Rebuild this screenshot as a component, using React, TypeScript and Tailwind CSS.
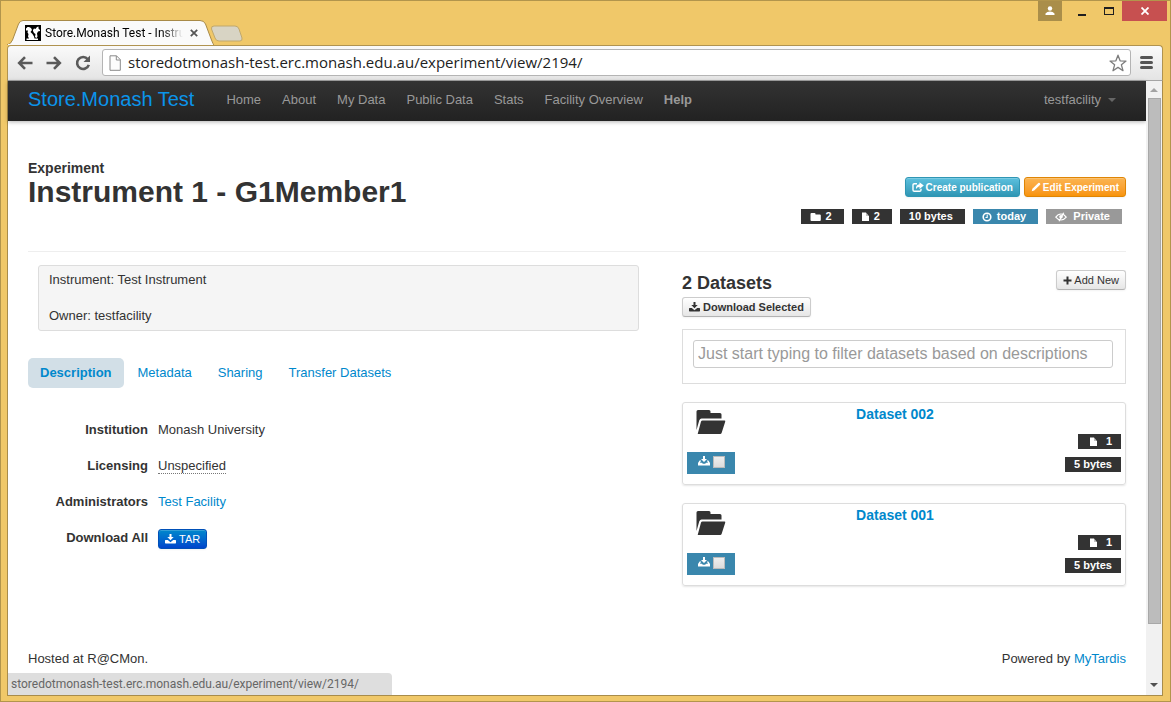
import React from "react";

const ARIAL = "font-['Liberation_Sans',Arial,sans-serif]";
const UI = "font-['Open_Sans','Noto_Sans',sans-serif]";
const UI_SMALL = "font-['Roboto','Noto_Sans',sans-serif]";

type IconProps = { className?: string };

const DownloadIcon = ({ className = "" }: IconProps) => (
  <svg viewBox="0 0 11 10" className={`h-[10px] w-[11px] shrink-0 ${className}`} fill="currentColor" aria-hidden="true">
    <path d="M4.500 0h2v3h2.200L5.500 6.300 2.300 3h2.200z" />
    <path d="M.5 6h2.300L5.500 8.200 8.200 6h2.300l.5.500V9l-.5.500H.5L0 9V6.500z" />
  </svg>
);

const TrayIcon = ({ className = "" }: IconProps) => (
  <svg viewBox="0 0 12 10" className={`h-[10px] w-3 shrink-0 ${className}`} fill="currentColor" aria-hidden="true">
    <path d="M5 0h2v3h2L6 6 3 3h2z" />
    <path d="M1.600 4.600h1.600L2 6.700h2l.8 1h2.400l.8-1h2L8.800 4.600h1.600L12 7v2.500H0V7z" />
  </svg>
);

const FolderIcon = ({ className = "" }: IconProps) => (
  <svg viewBox="0 0 12 10" className={`h-[10px] w-3 shrink-0 ${className}`} fill="currentColor" aria-hidden="true">
    <path d="M1.500 1h3q1 0 1 1v.4h4.300q1 0 1 1V8q0 1-1 1H1.500q-1 0-1-1V2q0-1 1-1z" />
  </svg>
);

const FileIcon = ({ className = "" }: IconProps) => (
  <svg viewBox="0 0 9 10" className={`h-[10px] w-[9px] shrink-0 ${className}`} fill="currentColor" aria-hidden="true">
    <path d="M1 .5h4V4h3v5H1z" />
    <path d="M5 .5 8 4H5z" opacity=".7" />
  </svg>
);

const ClockIcon = () => (
  <svg viewBox="0 0 10 10" className="size-[10px] shrink-0" fill="none" stroke="currentColor" aria-hidden="true">
    <circle cx="5" cy="5" r="3.800" strokeWidth="1.600" />
    <path d="M5.200 2.600v2.900H3.500" strokeWidth="1.100" />
  </svg>
);

const EyeOffIcon = () => (
  <svg viewBox="0 0 12 10" className="h-[10px] w-3 shrink-0" fill="none" stroke="currentColor" aria-hidden="true">
    <path d="M.8 5.200Q3 2 6 2t5.200 3.200Q9 8 6 8T.8 5.200z" strokeWidth="1.200" />
    <circle cx="6" cy="4.800" r="1.800" fill="currentColor" stroke="none" />
    <path d="M8.700.8 4 9.300" strokeWidth="1.300" />
  </svg>
);

const ShareIcon = () => (
  <svg viewBox="0 0 12 11" className="h-[11px] w-3 shrink-0" fill="none" stroke="currentColor" aria-hidden="true">
    <path d="M5 1.700H2.300Q1 1.700 1 3v5q0 1.300 1.300 1.300h5.400Q9 9.300 9 8V6.800" strokeWidth="1.400" />
    <path d="M7.500.2 11.800 3.600 7.500 7V5Q5 4.800 4 7.200 3.500 2.500 7.500 2.200z" fill="currentColor" stroke="none" />
  </svg>
);

const PencilIcon = () => (
  <svg viewBox="0 0 10 10" className="size-[10px] shrink-0" fill="currentColor" aria-hidden="true">
    <path d="M.7 9.300 1.400 6.800 7.300.9Q8 .4 8.700 1l.4.400q.6.700 0 1.300L3.200 8.600z" />
  </svg>
);

const PlusIcon = () => (
  <svg viewBox="0 0 9 9" className="size-[9px] shrink-0" fill="currentColor" aria-hidden="true">
    <path d="M3.500.5h2v3h3v2h-3v3h-2v-3h-3v-2h3z" />
  </svg>
);

const FolderOpenIcon = () => (
  <svg viewBox="0 0 30 25" className="h-[25px] w-[30px]" fill="#333" aria-hidden="true">
    <path d="M.5 20V1.500Q.5 0 2 0h11q1.500 0 1.500 1.500V3h9.500q1.500 0 1.500 1.500V8.500H5.500Q4 8.500 3.300 10.200z" />
    <path d="M6.500 10.500h22q1.100 0 .7 1.200L25.600 23q-.4 1-1.400 1H1.700L5 11.500q.4-1 1.500-1z" />
  </svg>
);

type BadgeProps = { children: React.ReactNode; color?: string; pad?: string };

function Badge({ children, color = "bg-[#333]", pad = "px-[9px]" }: BadgeProps) {
  return (
    <span className={`flex h-[15px] items-center text-[11px] leading-[15px] font-bold whitespace-pre text-white ${color} ${pad}`}>
      {children}
    </span>
  );
}

function TabStrip() {
  return (
    <header className="flex h-[44px] items-end">
      <div className="relative h-[25px] w-[207px] shrink-0">
        <svg viewBox="0 0 207 25" className="absolute inset-0 h-[25px] w-[207px]" aria-hidden="true">
          <path d="M0 25Q4 24 5.500 20L11.500 4Q13 .5 16 .5H193Q197 .5 198.500 4L204.500 20Q206 24 207 25z" fill="#fafafa" stroke="#a88a48" />
          <path d="M1 24h205v1H1z" fill="#fafafa" />
        </svg>
        <div className="relative flex h-[25px] items-center pl-[18px]">
          <svg viewBox="0 0 16 16" className="size-4 shrink-0" aria-hidden="true">
            <path d="M0 0h16v16H0z" />
            <path d="M1 5.500V3.500L2.500 2H4l2 1 1 2-1.500 2L7.500 9l1.500 2.500.5 2H13V15H1.500v-1.500H4L3 11.500 3.500 9 2.500 7.500 3 5.500z" fill="#fff" />
            <path d="M8 6V5l1-1.500L10.500 4 12 2l1.500-.5v2L15 5v1l-2 .5-1 2 .5 3-1 1.500-1.500-1L10.500 9 9 8z" fill="#fff" />
          </svg>
          <span className={`ml-1 w-[138px] bg-gradient-to-r from-black from-85% to-transparent bg-clip-text text-xs whitespace-nowrap text-transparent ${UI_SMALL}`}>
            Store.Monash Test - Instru
          </span>
          <button aria-label="Close tab" className="ml-[7px]">
            <svg viewBox="0 0 8 8" className="size-2" stroke="#555" strokeWidth="1.800" aria-hidden="true">
              <path d="M.8.8l6.400 6.400M7.200.8.8 7.200" />
            </svg>
          </button>
        </div>
      </div>
      <button aria-label="New tab" className="mb-[3px] ml-[-4px]">
        <svg viewBox="0 0 33 17" className="h-[17px] w-[33px]" aria-hidden="true">
          <path d="M4 1h21q3 0 4 3l3 9q.5 3-2 3H9q-3 0-4-3L1.500 4Q1 1 4 1z" fill="#d8d4c4" stroke="#c0a86c" />
        </svg>
      </button>
      <div className="ml-auto flex self-start">
        <button aria-label="User" className="flex h-5 w-6 items-center justify-center bg-[#aa8e4a]">
          <svg viewBox="0 0 10 10" className="size-[10px]" fill="#fff" aria-hidden="true">
            <circle cx="5" cy="2.500" r="2.200" />
            <path d="M.5 9V7.500Q2 5.500 5 5.500t4.500 2V9z" />
          </svg>
        </button>
        <button aria-label="Minimize" className="ml-4 flex h-5 items-end pb-[5px]">
          <span className="h-[2px] w-2 bg-[#1f1f1f]" />
        </button>
        <button aria-label="Maximize" className="ml-[18px] flex h-5 items-center">
          <span className="h-2 w-[10px] border border-t-2 border-[#1f1f1f]" />
        </button>
        <button aria-label="Close" className="ml-2 mr-[-4px] flex h-5 w-[45px] items-center justify-center bg-[#c75050]">
          <svg viewBox="0 0 8 8" className="size-2" stroke="#fff" strokeWidth="1.800" aria-hidden="true">
            <path d="M.5.500l7 7M7.500.5l-7 7" />
          </svg>
        </button>
      </div>
    </header>
  );
}

function AddressBar() {
  return (
    <div className="flex h-9 items-center rounded-t border-x border-t border-b border-[#b09350] border-b-[#a5a5a5] bg-gradient-to-b from-[#fafafa] to-[#e4e4e4] pr-[9px] pb-px pl-2">
      <div className="flex items-center gap-[13px] pl-px text-[#5a5a5a]">
        <button aria-label="Back">
          <svg viewBox="0 0 16 14" className="h-[14px] w-4" fill="none" stroke="currentColor" strokeWidth="2.600" aria-hidden="true">
            <path d="M15.500 7H2.500M8 1.200 2.200 7 8 12.800" />
          </svg>
        </button>
        <button aria-label="Forward">
          <svg viewBox="0 0 16 14" className="h-[14px] w-4" fill="none" stroke="currentColor" strokeWidth="2.600" aria-hidden="true">
            <path d="M.5 7h13M8 1.200 13.800 7 8 12.800" />
          </svg>
        </button>
        <button aria-label="Reload">
          <svg viewBox="0 0 16 16" className="size-4" aria-hidden="true">
            <path d="M12.800 4.200A6 6 0 1 0 13.800 9.800" fill="none" stroke="currentColor" strokeWidth="2.600" />
            <path d="M15 .5V7H8.500z" fill="currentColor" />
          </svg>
        </button>
      </div>
      <div className="ml-[11px] flex h-[27px] min-w-0 flex-1 items-center rounded-[3px] border border-[#b4b4b4] bg-white pr-[3px] pl-1">
        <svg viewBox="0 0 12 16" className="ml-[2px] h-4 w-3 shrink-0" fill="#fdfdfd" stroke="#8a8a8a" aria-hidden="true">
          <path d="M1 .8h6.500L11.300 4.600V15.300H1zM7.300.8V5h4" />
        </svg>
        <input
          aria-label="Address"
          className={`ml-[7px] min-w-0 flex-1 bg-transparent text-[15px] text-[#222] outline-none ${UI}`}
          defaultValue="storedotmonash-test.erc.monash.edu.au/experiment/view/2194/"
        />
        <button aria-label="Bookmark">
          <svg viewBox="0 0 18 18" className="size-[18px]" fill="#fff" stroke="#7d7d7d" strokeWidth="1.300" strokeLinejoin="round" aria-hidden="true">
            <path d="M9 1.200l2.100 5.600 5.900.3-4.600 3.700 1.600 5.900L9 13.400l-5 3.300 1.600-5.900L1 7.100l5.900-.3z" />
          </svg>
        </button>
      </div>
      <button aria-label="Menu" className="ml-[9px] flex flex-col gap-[2px]">
        <span className="h-[3px] w-[13px] rounded-sm bg-[#555]" />
        <span className="h-[3px] w-[13px] rounded-sm bg-[#555]" />
        <span className="h-[3px] w-[13px] rounded-sm bg-[#555]" />
      </button>
    </div>
  );
}

const NAV = ["Home", "About", "My Data", "Public Data", "Stats", "Facility Overview"];

function Navbar() {
  return (
    <nav className="flex h-10 shrink-0 items-center bg-gradient-to-b from-[#333] to-[#222] px-5 pb-[3px] text-[13px] text-[#999] shadow-[0_1px_4px_rgba(0,0,0,0.3)]">
      <a href="#" className="mr-8 pb-[2px] text-[20px] text-[#0b94ea]">Store.Monash Test</a>
      <div className="flex gap-[21px]">
        {NAV.map((item) => (
          <a key={item} href="#">{item}</a>
        ))}
        <a href="#" className="font-bold">Help</a>
      </div>
      <button className="ml-auto flex items-center gap-[7px] pr-[10px]">
        testfacility
        <svg viewBox="0 0 8 4" className="h-1 w-2" fill="#666" aria-hidden="true">
          <path d="M0 0h8L4 4z" />
        </svg>
      </button>
    </nav>
  );
}

function DatasetCard({ name }: { name: string }) {
  return (
    <article className="grid h-[83px] grid-cols-[48px_1fr_56px] rounded-[3px] border border-[#ddd] px-1 shadow-[0_1px_2px_rgba(0,0,0,0.1)]">
      <div className="flex flex-col">
        <span className="mt-[7px] pl-[9px]"><FolderOpenIcon /></span>
        <label className="mt-[17px] flex h-[22px] items-center gap-[3px] bg-[#3a87ad] pl-[11px] text-white">
          <TrayIcon className="mb-1" />
          <input
            type="checkbox"
            aria-label={`Select ${name}`}
            className="mb-[2px] size-3 appearance-none border border-[#bbb] bg-gradient-to-b from-[#eee] to-[#dcdcdc]"
          />
        </label>
      </div>
      <a href="#" className="pt-[2px] pr-[10px] text-center text-[14px] leading-[18px] font-bold text-[#08c]">{name}</a>
      <div className="flex flex-col items-end gap-2 pt-[31px]">
        <Badge><FileIcon className="mx-[2px]" />{"  1"}</Badge>
        <Badge>5 bytes</Badge>
      </div>
    </article>
  );
}

const BTN = "flex h-5 items-center rounded-[3px] border whitespace-nowrap shadow-[inset_0_1px_0_rgba(255,255,255,0.2),0_1px_2px_rgba(0,0,0,0.05)]";
const GREY_BTN = "border-[#ccc] border-b-[#b3b3b3] bg-gradient-to-b from-white to-[#e6e6e6] text-[#333]";
const WIDE = "pr-3 pl-[9px]";

function Heading() {
  return (
    <section className="flex items-start justify-between border-b border-[#eee] pb-[27px]">
      <div>
        <p className="text-[14px] leading-[18px] font-bold">Experiment</p>
        <h1 className="text-[30px] leading-[30px] font-bold whitespace-nowrap">Instrument 1 - G1Member1</h1>
      </div>
      <div className="flex flex-col items-end gap-3 pt-[18px]">
        <div className="flex gap-1 text-[10px] font-bold text-white">
          <button className={`${BTN} gap-[2px] border-[#2f96b4] bg-gradient-to-b from-[#5bc0de] to-[#2f96b4] px-[6px]`}>
            <ShareIcon />Create publication
          </button>
          <button className={`${BTN} gap-[2px] border-[#df8505] bg-gradient-to-b from-[#fbb450] to-[#f89406] px-[6px]`}>
            <PencilIcon />Edit Experiment
          </button>
        </div>
        <div className="flex gap-2 pr-1">
          <Badge pad={WIDE}><FolderIcon className="mr-1" />2</Badge>
          <Badge pad={WIDE}><FileIcon className="mr-1" />2</Badge>
          <Badge pad={WIDE}>10 bytes</Badge>
          <Badge pad={WIDE} color="bg-[#3a87ad]"><span className="mr-[5px]"><ClockIcon /></span>today</Badge>
          <Badge pad={WIDE} color="bg-[#999]"><EyeOffIcon />{"  Private"}</Badge>
        </div>
      </div>
    </section>
  );
}

const dtCls = "text-right font-bold";

function Details() {
  return (
    <section className="min-w-0 flex-1 pt-[13px] pr-5">
      <div className="ml-[10px] rounded-[3px] border border-[#ddd] bg-[#f5f5f5] px-[10px] py-[5px] leading-[18px]">
        <p>Instrument: Test Instrument</p>
        <p className="mt-[18px]">Owner: testfacility</p>
      </div>
      <div role="tablist" className="mt-[27px] flex h-[30px] gap-[2px] text-[#08c]">
        <button role="tab" aria-selected="true" className="rounded-[5px] bg-[#d2dfe7] px-3 font-bold">Description</button>
        <button role="tab" className="px-3">Metadata</button>
        <button role="tab" className="px-3">Sharing</button>
        <button role="tab" className="px-3">Transfer Datasets</button>
      </div>
      <dl className="mt-[33px] grid grid-cols-[120px_1fr] gap-x-[10px] gap-y-[18px] leading-[18px]">
        <dt className={dtCls}>Institution</dt>
        <dd>Monash University</dd>
        <dt className={dtCls}>Licensing</dt>
        <dd><span className="border-b border-dotted border-[#777]">Unspecified</span></dd>
        <dt className={dtCls}>Administrators</dt>
        <dd><a href="#" className="text-[#08c]">Test Facility</a></dd>
        <dt className={dtCls}>Download All</dt>
        <dd>
          <button className={`${BTN} gap-[3px] border-[#0050b8] bg-gradient-to-b from-[#08c] to-[#04c] px-[6px] text-[11px] text-white`}>
            <DownloadIcon />TAR
          </button>
        </dd>
      </dl>
    </section>
  );
}

function Datasets() {
  return (
    <section className="w-[444px] shrink-0 pt-[18px]">
      <div className="flex items-start justify-between text-[11px]">
        <div>
          <h2 className="mb-px text-[18px] leading-[26px] font-bold">2 Datasets</h2>
          <button className={`${BTN} ${GREY_BTN} gap-[3px] px-[6px] font-bold`}><DownloadIcon />Download Selected</button>
        </div>
        <button className={`${BTN} ${GREY_BTN} gap-[2px] px-[6px]`}><PlusIcon />Add New</button>
      </div>
      <div className="mt-3 border border-[#ddd] px-[10px] pt-[10px] pb-[15px]">
        <input
          aria-label="Filter datasets"
          placeholder="Just start typing to filter datasets based on descriptions"
          className="block h-7 w-[420px] max-w-full rounded-[3px] border border-[#ccc] px-1 text-[16px] placeholder:text-[#999]"
        />
      </div>
      <div className="mt-[18px] flex flex-col gap-[18px]">
        <DatasetCard name="Dataset 002" />
        <DatasetCard name="Dataset 001" />
      </div>
    </section>
  );
}

function Scrollbar() {
  return (
    <div className="flex w-4 shrink-0 flex-col items-center bg-[#f1f1f1]" aria-hidden="true">
      <div className="flex h-[17px] items-center">
        <svg viewBox="0 0 8 4" className="h-1 w-2" fill="#a3a3a3"><path d="M0 4h8L4 0z" /></svg>
      </div>
      <div className="w-[13px] grow-[21] border border-[#a8a8a8] bg-[#bcbcbc]" />
      <div className="grow-[2]" />
      <div className="flex h-[21px] items-center">
        <svg viewBox="0 0 8 4" className="h-1 w-2" fill="#505050"><path d="M0 0h8L4 4z" /></svg>
      </div>
    </div>
  );
}

export default function App() {
  return (
    <div className={`flex min-h-screen flex-col border border-[#b2954c] bg-[#f0c869] pr-[7px] pb-[5px] pl-[6px] ${ARIAL}`}>
      <TabStrip />
      <AddressBar />
      <div className="relative flex flex-1 border border-t-0 border-[#a88c4b] bg-white">
        <div className="flex min-w-0 flex-1 flex-col text-[13px] text-[#333]">
          <Navbar />
          <main className="px-5 pt-[38px]">
            <Heading />
            <div className="flex gap-[23px]">
              <Details />
              <Datasets />
            </div>
          </main>
          <footer className="mt-auto flex justify-between px-5 pb-[27px] leading-[18px]">
            <p>Hosted at R@CMon.</p>
            <p>Powered by <a href="#" className="text-[#08c]">MyTardis</a></p>
          </footer>
        </div>
        <Scrollbar />
        <div className={`absolute bottom-0 left-0 h-[22px] w-[384px] rounded-tr bg-[#dedede] pl-[3px] text-xs leading-[22px] text-[#666] ${UI_SMALL}`}>
          storedotmonash-test.erc.monash.edu.au/experiment/view/2194/
        </div>
      </div>
    </div>
  );
}
